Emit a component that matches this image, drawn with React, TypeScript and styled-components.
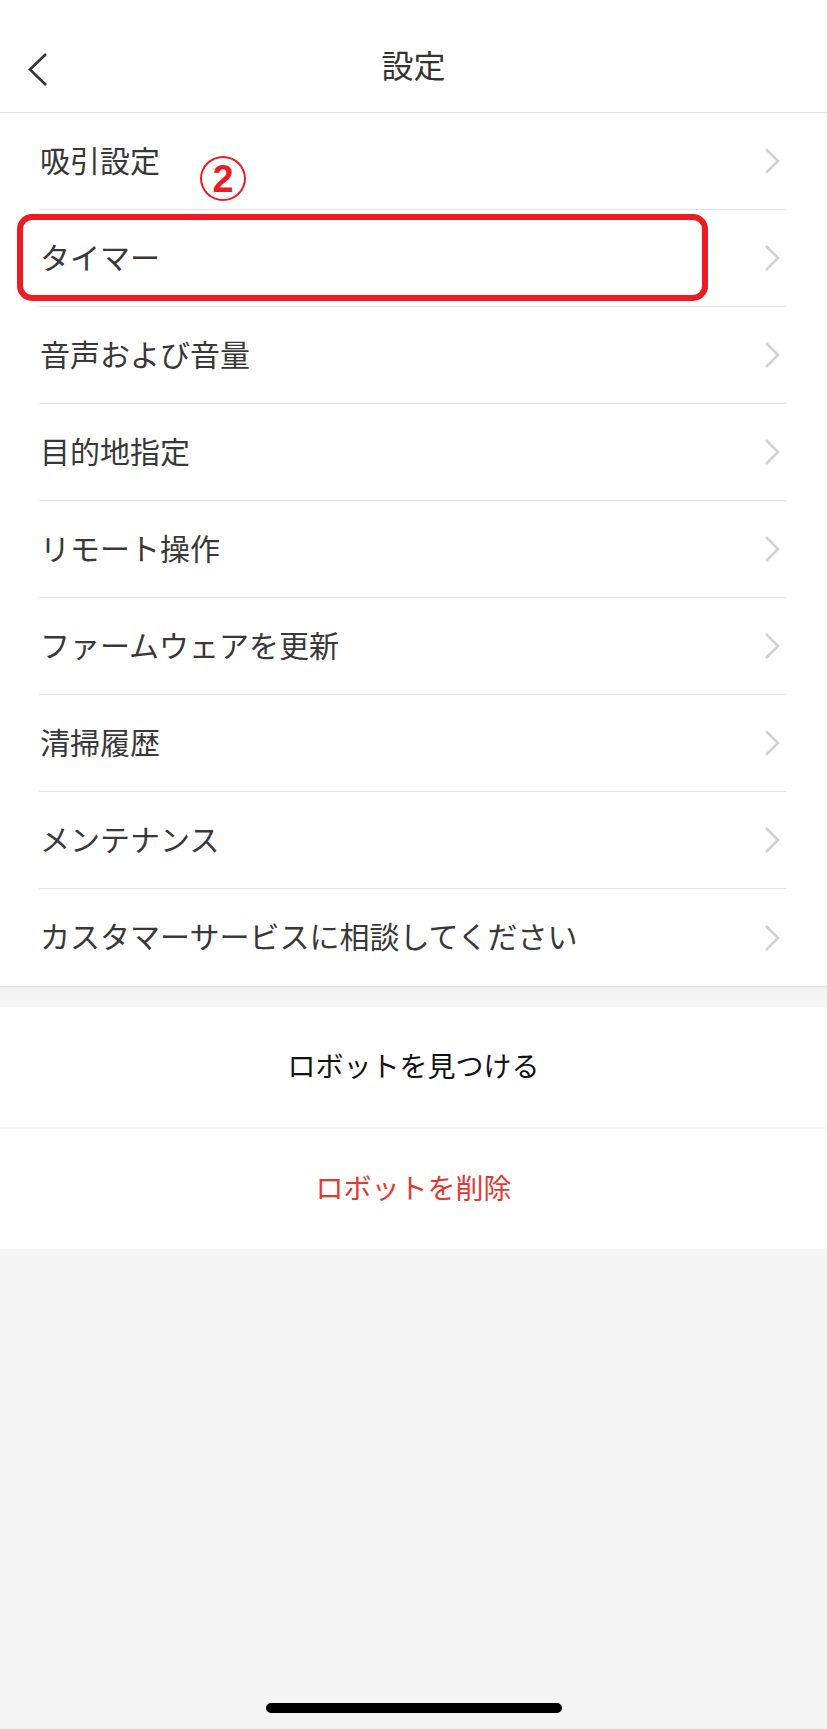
import { createGlobalStyle, styled } from "styled-components";

const GlobalStyle = createGlobalStyle`
  html, body {
    margin: 0;
    padding: 0;
    background: #f4f4f4;
  }
  body {
    font-family: "Noto Sans CJK JP", "Noto Sans", sans-serif;
  }
`;

const Page = styled.div`
  width: 827px;
  min-height: 1729px;
  display: flex;
  flex-direction: column;
  background: #f4f4f4;
`;

const Header = styled.header`
  position: relative;
  height: 113px;
  padding-top: 16px;
  box-sizing: border-box;
  display: flex;
  align-items: center;
  justify-content: center;
  background: #fff;
  border-bottom: 1px solid #e2e2e2;
`;

const BackButton = styled.button`
  position: absolute;
  left: 20px;
  top: 45px;
  border: 0;
  padding: 8px;
  background: none;
  display: flex;
`;

const Title = styled.h1`
  margin: 0;
  font-size: 32px;
  font-weight: 400;
  color: #333;
`;

const List = styled.div`
  position: relative;
  background: #fff;
  border-bottom: 1px solid #dcdcdc;
`;

const Row = styled.div`
  height: 97px;
  box-sizing: border-box;
  margin: 0 41px 0 39px;
  padding: 0 6px 0 1px;
  display: flex;
  align-items: center;
  justify-content: space-between;
  border-bottom: 1px solid #e6e6e6;

  &:last-child {
    border-bottom: 0;
  }
`;

const Label = styled.span`
  margin-bottom: 5px;
  font-size: 30px;
  color: #383838;
`;

const Highlight = styled.div`
  position: absolute;
  left: 17px;
  top: 101px;
  width: 691px;
  height: 87px;
  box-sizing: border-box;
  border: 6px solid #ed1c24;
  border-radius: 15px;
  pointer-events: none;
`;

const StepMark = styled.div`
  position: absolute;
  left: 200px;
  top: 43px;
  width: 46px;
  height: 45px;
  box-sizing: border-box;
  border: 2px solid #ed1c24;
  border-radius: 50%;
  display: flex;
  align-items: center;
  justify-content: center;
  font-family: "Liberation Sans", Arial, sans-serif;
  font-weight: 700;
  font-size: 38px;
  line-height: 1;
  color: #ed1c24;
`;

const Actions = styled.div`
  margin-top: 20px;
  display: flex;
  flex-direction: column;
  gap: 2px;
`;

const ActionButton = styled.button<{ $danger?: boolean }>`
  height: 120px;
  padding: 0 0 4px;
  border: 0;
  background: #fff;
  font-family: "Noto Sans CJK JP", "Noto Sans", sans-serif;
  font-size: 28px;
  color: ${(p) => (p.$danger ? "#e8352d" : "#111")};
`;

const HomeBar = styled.div`
  margin: auto auto 16px;
  width: 296px;
  height: 10px;
  border-radius: 5px;
  background: #000;
`;

const items = [
  "吸引設定",
  "タイマー",
  "音声および音量",
  "目的地指定",
  "リモート操作",
  "ファームウェアを更新",
  "清掃履歴",
  "メンテナンス",
  "カスタマーサービスに相談してください",
];

function Chevron() {
  return (
    <svg width="16" height="28" viewBox="0 0 16 28">
      <polyline
        points="2,2 14,14 2,26"
        fill="none"
        stroke="#d2d2d2"
        strokeWidth="2.6"
      />
    </svg>
  );
}

export default function App() {
  return (
    <Page>
      <GlobalStyle />
      <Header>
        <BackButton>
          <svg width="20" height="33" viewBox="0 0 20 33">
            <polyline
              points="18,1 2,16.5 18,32"
              fill="none"
              stroke="#333"
              strokeWidth="2.6"
            />
          </svg>
        </BackButton>
        <Title>設定</Title>
      </Header>
      <List>
        <Highlight />
        <StepMark>2</StepMark>
        {items.map((item) => (
          <Row key={item}>
            <Label>{item}</Label>
            <Chevron />
          </Row>
        ))}
      </List>
      <Actions>
        <ActionButton>ロボットを見つける</ActionButton>
        <ActionButton $danger>ロボットを削除</ActionButton>
      </Actions>
      <HomeBar />
    </Page>
  );
}
